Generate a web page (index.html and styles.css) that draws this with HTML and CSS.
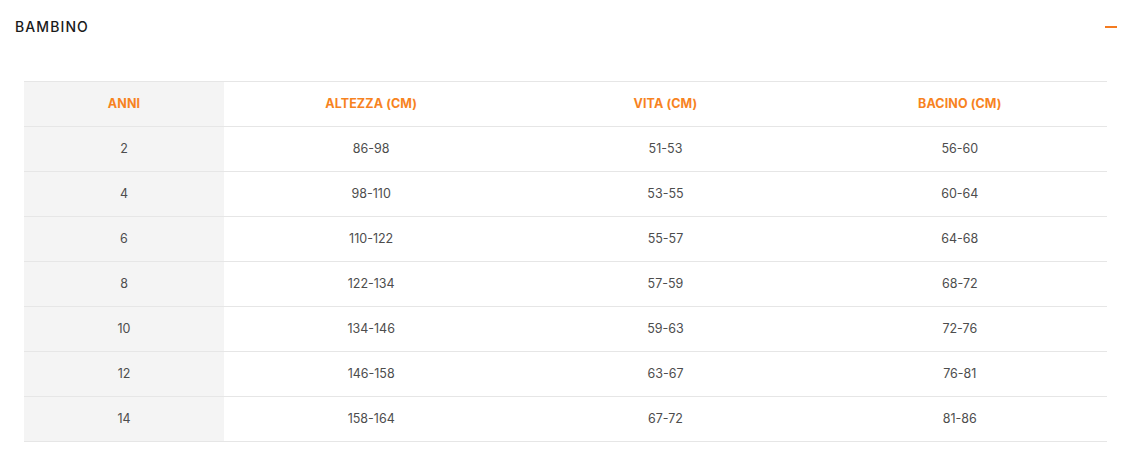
FILE: index.html
```html
<!DOCTYPE html>
<html>
<head>
<meta charset="utf-8">
<link rel="stylesheet" href="styles.css">
</head>
<body>
<section class="acc">
  <div class="acc-head">
    <span class="acc-title">BAMBINO</span>
    <span class="acc-toggle"></span>
  </div>
  <div class="acc-body">
    <table class="sizes">
      <thead>
        <tr><th class="first">ANNI</th><th>ALTEZZA (CM)</th><th>VITA (CM)</th><th>BACINO (CM)</th></tr>
      </thead>
      <tbody>
        <tr><td class="first">2</td><td>86-98</td><td>51-53</td><td>56-60</td></tr>
        <tr><td class="first">4</td><td>98-110</td><td>53-55</td><td>60-64</td></tr>
        <tr><td class="first">6</td><td>110-122</td><td>55-57</td><td>64-68</td></tr>
        <tr><td class="first">8</td><td>122-134</td><td>57-59</td><td>68-72</td></tr>
        <tr><td class="first">10</td><td>134-146</td><td>59-63</td><td>72-76</td></tr>
        <tr><td class="first">12</td><td>146-158</td><td>63-67</td><td>76-81</td></tr>
        <tr><td class="first">14</td><td>158-164</td><td>67-72</td><td>81-86</td></tr>
      </tbody>
    </table>
  </div>
</section>
</body>
</html>
```
FILE: styles.css
```css
html, body { margin: 0; padding: 0; background: #fff; }
body { font-family: Inter, "Liberation Sans", sans-serif; color: #333; }
.acc-head {
  display: flex;
  justify-content: space-between;
  align-items: center;
  height: 53px;
  padding: 0 31px 0 15px;
}
.acc-title {
  font-size: 14px;
  font-weight: 500;
  letter-spacing: 1.1px;
  color: #1a1a1a;
}
.acc-toggle {
  width: 12px;
  height: 2px;
  background: #f47b20;
}
.acc-body { padding: 28px 41px 0 24px; }
.sizes {
  width: 100%;
  border-collapse: collapse;
  table-layout: fixed;
}
.sizes th, .sizes td {
  height: 45px;
  padding: 0 0 2px;
  box-sizing: border-box;
  text-align: center;
  border-top: 1px solid #e6e6e6;
  border-bottom: 1px solid #e6e6e6;
}
.sizes th {
  font-size: 12.5px;
  font-weight: 700;
  color: #f7831f;
  letter-spacing: 0.1px;
}
.sizes td {
  font-size: 12.5px;
  color: #4d4d4d;
}
.sizes .first { width: 200px; background: #f4f4f4; }
```
